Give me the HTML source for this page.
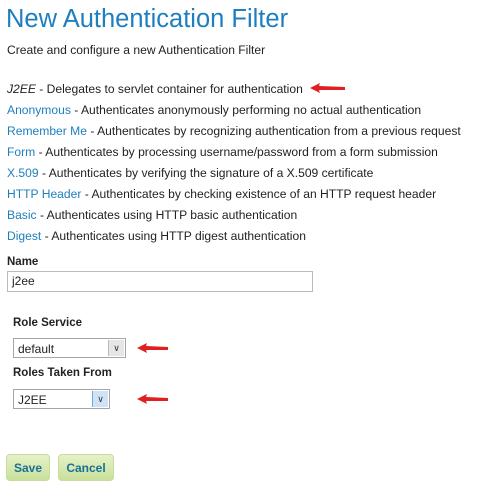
<!DOCTYPE html>
<html><head><style>
body{margin:0;width:479px;height:500px;background:#fff;font-family:"Liberation Sans",sans-serif;color:#222;position:relative;overflow:hidden}
.a{position:absolute;white-space:nowrap}
h1{position:absolute;left:6px;top:5px;margin:0;font-size:25.5px;font-weight:normal;color:#1d7fbf}
.l{font-size:12.1px;left:7px}
.l a{color:#1d7fbf;text-decoration:none}
.lab{font-size:11.5px;font-weight:bold;color:#222}
.sel{position:absolute;border:1px solid #a5a5a5;background:#fff;font-size:12px;box-sizing:border-box}
.sel span{position:absolute;left:4px;top:3px}
.dd{position:absolute;right:1px;top:1px;bottom:1px;width:15px;background:#e6e6e6;border-left:1px solid #bbb;font-size:9px;text-align:center;line-height:17px;color:#333}
.btn{position:absolute;top:454px;height:27px;border:1px solid #c6dca0;border-radius:4px;background:linear-gradient(#e6f2c8,#c8e09a);color:#1a6f9a;font-weight:bold;font-size:12px;text-align:center;line-height:27px;box-sizing:border-box}
</style></head><body>
<h1>New Authentication Filter</h1>
<div class="a l" style="top:43px">Create and configure a new Authentication Filter</div>
<div class="a l" style="top:82px"><i>J2EE</i> - Delegates to servlet container for authentication</div>
<div class="a l" style="top:103px"><a>Anonymous</a> - Authenticates anonymously performing no actual authentication</div>
<div class="a l" style="top:124px"><a>Remember Me</a> - Authenticates by recognizing authentication from a previous request</div>
<div class="a l" style="top:145px"><a>Form</a> - Authenticates by processing username/password from a form submission</div>
<div class="a l" style="top:166px"><a>X.509</a> - Authenticates by verifying the signature of a X.509 certificate</div>
<div class="a l" style="top:187px"><a>HTTP Header</a> - Authenticates by checking existence of an HTTP request header</div>
<div class="a l" style="top:208px"><a>Basic</a> - Authenticates using HTTP basic authentication</div>
<div class="a l" style="top:229px"><a>Digest</a> - Authenticates using HTTP digest authentication</div>
<div class="a lab" style="left:7px;top:256px">Name</div>
<div class="sel" style="left:7px;top:271px;width:306px;height:21px;border-color:#bbb"><span style="top:2px">j2ee</span></div>
<div class="a lab" style="left:13px;top:317px">Role Service</div>
<div class="sel" style="left:13px;top:338px;width:113px;height:20px"><span>default</span><div class="dd">&#8744;</div></div>
<div class="a lab" style="left:13px;top:367px">Roles Taken From</div>
<div class="sel" style="left:13px;top:389px;width:97px;height:20px"><span>J2EE</span><div class="dd" style="background:#cfe3f7;border-left-color:#7aa7d6">&#8744;</div></div>
<svg class="a" style="left:0;top:0" width="479" height="500">
<g fill="#e02020">
<path d="M310 88 L320 83 L319 86 L345 87 L345 90 L319 90 L320 93 Z"/>
<path d="M137 348 L147 343 L146 346 L168 347 L168 350 L146 350 L147 353 Z"/>
<path d="M137 399 L147 394 L146 397 L168 398 L168 401 L146 401 L147 404 Z"/>
</g></svg>
<div class="btn" style="left:6px;width:44px">Save</div>
<div class="btn" style="left:58px;width:56px">Cancel</div>
</body></html>
